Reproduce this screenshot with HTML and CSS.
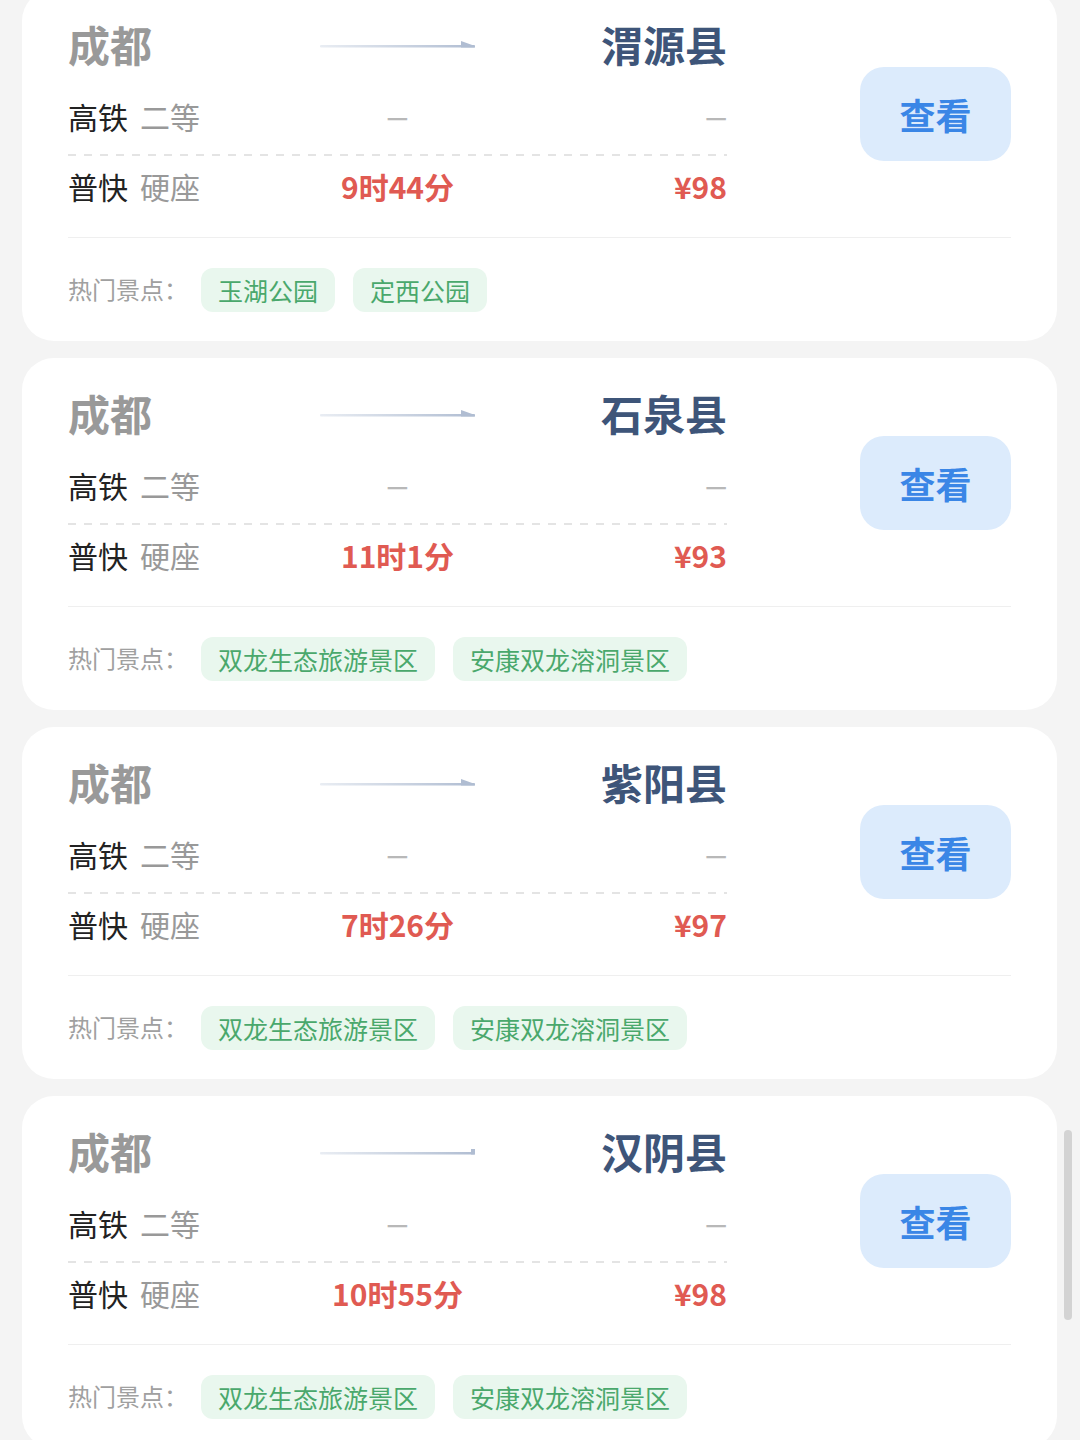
FILE: index.html
```html
<!DOCTYPE html>
<html>
    <head>
        <meta charset="utf-8"/>
        <title>车票查询</title>
        <link rel="stylesheet" href="styles.css">
    </head>

    <body>
        <div id="list">

          <div class="card">
            <div class="card-top">
              <div class="route">
                <div class="line city-line">
                  <span class="from">成都</span>
                  <span class="arrow"><svg width="155" height="12" viewBox="0 0 155 12"><defs><linearGradient id="g1" x1="0" x2="1"><stop offset="0" stop-color="#e9edf3"/><stop offset="1" stop-color="#b0bdd2"/></linearGradient></defs><rect x="0" y="7" width="155" height="2.5" rx="1" fill="url(#g1)"/><path d="M141 3 L155 8 L155 9.5 L141 9.5 Z" fill="#b0bdd2"/></svg></span>
                  <span class="to">渭源县</span>
                </div>
                <div class="line row dashed">
                  <span class="kind">高铁<em>二等</em></span>
                  <span class="none">—</span>
                  <span class="none right">—</span>
                </div>
                <div class="line row">
                  <span class="kind">普快<em>硬座</em></span>
                  <span class="time">9时44分</span>
                  <span class="price">¥98</span>
                </div>
              </div>
              <div class="action"><a class="btn">查看</a></div>
            </div>
            <div class="spots">
              <span class="spots-label">热门景点：</span>
              <span class="tag">玉湖公园</span>
              <span class="tag">定西公园</span>
            </div>
          </div>

          <div class="card">
            <div class="card-top">
              <div class="route">
                <div class="line city-line">
                  <span class="from">成都</span>
                  <span class="arrow"><svg width="155" height="12" viewBox="0 0 155 12"><defs><linearGradient id="g2" x1="0" x2="1"><stop offset="0" stop-color="#e9edf3"/><stop offset="1" stop-color="#b0bdd2"/></linearGradient></defs><rect x="0" y="7" width="155" height="2.5" rx="1" fill="url(#g2)"/><path d="M141 3 L155 8 L155 9.5 L141 9.5 Z" fill="#b0bdd2"/></svg></span>
                  <span class="to">石泉县</span>
                </div>
                <div class="line row dashed">
                  <span class="kind">高铁<em>二等</em></span>
                  <span class="none">—</span>
                  <span class="none right">—</span>
                </div>
                <div class="line row">
                  <span class="kind">普快<em>硬座</em></span>
                  <span class="time">11时1分</span>
                  <span class="price">¥93</span>
                </div>
              </div>
              <div class="action"><a class="btn">查看</a></div>
            </div>
            <div class="spots">
              <span class="spots-label">热门景点：</span>
              <span class="tag">双龙生态旅游景区</span>
              <span class="tag">安康双龙溶洞景区</span>
            </div>
          </div>

          <div class="card">
            <div class="card-top">
              <div class="route">
                <div class="line city-line">
                  <span class="from">成都</span>
                  <span class="arrow"><svg width="155" height="12" viewBox="0 0 155 12"><defs><linearGradient id="g3" x1="0" x2="1"><stop offset="0" stop-color="#e9edf3"/><stop offset="1" stop-color="#b0bdd2"/></linearGradient></defs><rect x="0" y="7" width="155" height="2.5" rx="1" fill="url(#g3)"/><path d="M141 3 L155 8 L155 9.5 L141 9.5 Z" fill="#b0bdd2"/></svg></span>
                  <span class="to">紫阳县</span>
                </div>
                <div class="line row dashed">
                  <span class="kind">高铁<em>二等</em></span>
                  <span class="none">—</span>
                  <span class="none right">—</span>
                </div>
                <div class="line row">
                  <span class="kind">普快<em>硬座</em></span>
                  <span class="time">7时26分</span>
                  <span class="price">¥97</span>
                </div>
              </div>
              <div class="action"><a class="btn">查看</a></div>
            </div>
            <div class="spots">
              <span class="spots-label">热门景点：</span>
              <span class="tag">双龙生态旅游景区</span>
              <span class="tag">安康双龙溶洞景区</span>
            </div>
          </div>

          <div class="card">
            <div class="card-top">
              <div class="route">
                <div class="line city-line">
                  <span class="from">成都</span>
                  <span class="arrow"><svg width="155" height="12" viewBox="0 0 155 12"><defs><linearGradient id="g4" x1="0" x2="1"><stop offset="0" stop-color="#e9edf3"/><stop offset="1" stop-color="#b0bdd2"/></linearGradient></defs><rect x="0" y="7" width="155" height="2.5" rx="1" fill="url(#g4)"/><path d="M151 4 L155 4 L155 9.5 L151 9.5 Z" fill="#b0bdd2"/></svg></span>
                  <span class="to">汉阴县</span>
                </div>
                <div class="line row dashed">
                  <span class="kind">高铁<em>二等</em></span>
                  <span class="none">—</span>
                  <span class="none right">—</span>
                </div>
                <div class="line row">
                  <span class="kind">普快<em>硬座</em></span>
                  <span class="time">10时55分</span>
                  <span class="price">¥98</span>
                </div>
              </div>
              <div class="action"><a class="btn">查看</a></div>
            </div>
            <div class="spots">
              <span class="spots-label">热门景点：</span>
              <span class="tag">双龙生态旅游景区</span>
              <span class="tag">安康双龙溶洞景区</span>
            </div>
          </div>

        </div>

        <div class="scrollbar"></div>
    </body>
</html>
```

FILE: styles.css
```css
html, body {
  margin: 0;
  padding: 0;
  background: #f4f4f4;
  font-family: "Noto Sans CJK SC", "Noto Sans", sans-serif;
  overflow: hidden;
}

#list {
  margin-top: -11px;
}

.card {
  width: 1035px;
  height: 352px;
  box-sizing: border-box;
  margin: 0 0 17px 22px;
  padding: 32px 46px 0 46px;
  background: #fff;
  border-radius: 32px;
}

.card-top {
  display: flex;
  align-items: center;
  padding-bottom: 31px;
  border-bottom: 1px solid #efefef;
}

.route {
  width: 659px;
}

.line {
  display: grid;
  grid-template-columns: 1fr 1fr 1fr;
  align-items: center;
}

.line > span:nth-child(2) {
  text-align: center;
}

.line > span:nth-child(3) {
  text-align: right;
}

.city-line {
  height: 50px;
  margin-top: -8px;
  font-size: 42px;
  font-weight: bold;
}

.city-line .from {
  color: #999;
}

.city-line .to {
  color: #3e5579;
}

.city-line .arrow svg {
  display: block;
  margin: 0 auto;
}

.row {
  height: 40px;
  font-size: 30px;
  line-height: 40px;
  color: #222;
}

.row.dashed {
  margin-top: 33px;
  padding-bottom: 20px;
  margin-bottom: 10px;
  background-image: linear-gradient(to right, #e4e4e4 50%, transparent 50%);
  background-size: 16px 2px;
  background-repeat: repeat-x;
  background-position: left bottom;
}

.row .kind em {
  font-style: normal;
  color: #999;
  margin-left: 12px;
}

.row .none {
  color: #b8b8b8;
  font-size: 24px;
  font-weight: bold;
}

.row .time,
.row .price {
  color: #e05a52;
  font-weight: bold;
}

.action {
  flex: 1;
  display: flex;
  justify-content: flex-end;
}

.btn {
  display: flex;
  align-items: center;
  justify-content: center;
  width: 151px;
  height: 94px;
  border-radius: 24px;
  background: #dcebfc;
  color: #3a86e6;
  font-size: 36px;
  font-weight: bold;
}

.spots {
  display: flex;
  align-items: center;
  margin-top: 30px;
}

.spots-label {
  font-size: 24px;
  color: #a0a0a0;
  margin-right: 13px;
  margin-top: -4px;
}

.tag {
  height: 44px;
  line-height: 44px;
  padding: 0 17px;
  margin-right: 18px;
  border-radius: 12px;
  background: #e9f7ee;
  color: #4aa86c;
  font-size: 25px;
}

.scrollbar {
  position: fixed;
  left: 1064px;
  top: 1130px;
  width: 8px;
  height: 190px;
  border-radius: 4px;
  background: #d3d3d3;
}
```
